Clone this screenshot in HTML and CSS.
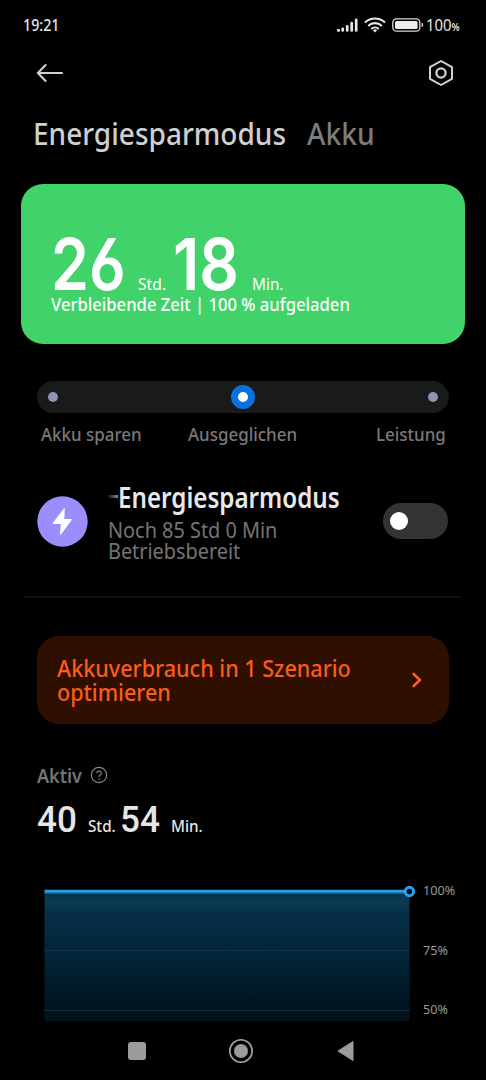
FILE: index.html
```html
<!DOCTYPE html>
<html lang="de">
<head>
    <meta charset="UTF-8">
    <meta name="viewport" content="width=device-width, initial-scale=1.0">
    <title>Energiesparmodus</title>
    <link rel="stylesheet" href="styles.css">
</head>
<body>
    <div class="status-bar">
        <span class="text clock">19:21</span>
        <div class="status-icons">
            <svg width="22" height="14" viewBox="0 0 22 14" stroke="#e8e8e8" stroke-width="2.7" stroke-linecap="round">
                <path d="M2.2 12.4h.5M6.7 12.5v-1.7M11.2 12.5V8.3M15.7 12.5V5M20.2 12.5V1.8"/>
            </svg>
            <svg class="wifi" width="22" height="16" viewBox="0 0 22 16" fill="none" stroke="#e8e8e8" stroke-width="2.1">
                <path d="M1 5.6a14.4 14.4 0 0 1 20 0M4.2 8.9a9.7 9.7 0 0 1 13.6 0M7.3 12a5.3 5.3 0 0 1 7.4 0"/>
                <path d="M8.9 13.2L11 15.6l2.1-2.4a3 3 0 0 0-4.2 0z" fill="#e8e8e8" stroke="none"/>
            </svg>
            <svg class="battery" width="32" height="14" viewBox="0 0 32 14">
                <rect x=".8" y=".8" width="27" height="12.4" rx="3.6" fill="none" stroke="#d8d8d8" stroke-width="1.3"/>
                <rect x="3" y="3" width="22.6" height="8" rx="1.6" fill="#ececec"/>
                <path d="M29.6 4.6q1.6.4 1.6 2.4t-1.6 2.4z" fill="#d8d8d8"/>
            </svg>
            <span class="text charge">100<small>%</small></span>
        </div>
    </div>

    <div class="toolbar">
        <svg width="28" height="20" viewBox="0 0 28 20" fill="none" stroke="#d2d2d2" stroke-width="2" stroke-linecap="round" stroke-linejoin="round">
            <path d="M26 10H1.8M9.6 2L1.8 10l7.8 8"/>
        </svg>
        <svg width="26" height="28" viewBox="0 0 26 28" fill="none" stroke="#d2d2d2" stroke-width="2" stroke-linejoin="round">
            <path d="M13 2l11 6.2v11.6L13 26 2 19.8V8.2z"/>
            <circle cx="13" cy="14" r="4.6" stroke-width="2.3"/>
        </svg>
    </div>

    <div class="tabs">
        <span class="text tab-active">Energiesparmodus</span>
        <span class="text tab">Akku</span>
    </div>

    <div class="card">
        <div class="remaining">
            <span class="text big hours">26</span>
            <span class="text std">Std.</span>
            <span class="text big minutes">18</span>
            <span class="text min">Min.</span>
        </div>
        <span class="text caption">Verbleibende Zeit | 100 % aufgeladen</span>
    </div>

    <div class="slider">
        <span class="dot"></span>
        <span class="dot selected"></span>
        <span class="dot"></span>
    </div>
    <div class="slider-labels">
        <span class="text">Akku sparen</span>
        <span class="text">Ausgeglichen</span>
        <span class="text">Leistung</span>
    </div>

    <div class="saver">
        <svg width="51" height="51" viewBox="0 0 51 51">
            <circle cx="25.5" cy="25.5" r="25.2" fill="#9b8dfb"/>
            <path d="M26.8 12.4L15.8 27q-.6 1 .5 1h7.5l-.8 10.2q.1 1.2.9.2L34.8 24q.6-1-.5-1h-7l.5-10.2q-.2-1.2-1-.4z" fill="#fff"/>
        </svg>
        <div class="saver-text">
            <div class="saver-title"><span class="fade"></span><span class="text saver-name">Energiesparmodus</span></div>
            <span class="text saver-line">Noch 85 Std 0 Min</span>
            <span class="text saver-line">Betriebsbereit</span>
        </div>
        <div class="toggle"><span class="knob"></span></div>
    </div>

    <div class="divider"></div>

    <div class="optimize">
        <div>
            <span class="text optimize-line">Akkuverbrauch in 1 Szenario</span>
            <span class="text optimize-line">optimieren</span>
        </div>
        <svg width="12" height="18" viewBox="0 0 12 18" fill="none" stroke="#fb602a" stroke-width="2.6" stroke-linecap="round" stroke-linejoin="round">
            <path d="M2.6 3l6.3 6-6.3 6"/>
        </svg>
    </div>

    <div class="active-head">
        <span class="text active-title">Aktiv</span>
        <svg width="18" height="18" viewBox="0 0 18 18" fill="none" stroke="#858585" stroke-width="1.2">
            <circle cx="9" cy="9" r="7.7"/>
            <path d="M6.7 7.3a2.3 2.1 0 1 1 3.5 1.7q-1.2.6-1.2 1.9M9 12.1v1.3"/>
        </svg>
    </div>
    <div class="active-time">
        <span class="text number">40</span>
        <span class="text unit">Std.</span>
        <span class="text number">54</span>
        <span class="text unit">Min.</span>
    </div>

    <div class="chart">
        <svg width="373" height="137" viewBox="0 0 373 137">
            <defs>
                <linearGradient id="area" x1="0" y1="0" x2="0" y2="1">
                    <stop offset="0" stop-color="#05334a"/>
                    <stop offset=".07" stop-color="#0a3b50"/>
                    <stop offset=".16" stop-color="#052f45"/>
                    <stop offset=".5" stop-color="#022539"/>
                    <stop offset=".85" stop-color="#011521"/>
                    <stop offset="1" stop-color="#01121b"/>
                </linearGradient>
            </defs>
            <rect x=".5" y="9" width="365" height="128" fill="url(#area)"/>
            <path d="M0 66.5h365M0 126.5h365" stroke="#2a4351" stroke-dasharray="1 1"/>
            <path d="M.5 9.2h365" stroke="#0c5a8e" stroke-width="1.6"/>
            <path d="M.5 7.2h365" stroke="#28a0ec" stroke-width="3"/>
            <circle cx="365.4" cy="7.5" r="4.2" fill="#000" stroke="#28a0ec" stroke-width="3"/>
        </svg>
        <div class="axis">
            <span class="text axis-label">100%</span>
            <span class="text axis-label">75%</span>
            <span class="text axis-label">50%</span>
        </div>
    </div>

    <div class="nav-bar">
        <svg width="18" height="18" viewBox="0 0 18 18"><rect width="18" height="18" rx="3" fill="#9c9c9c"/></svg>
        <svg width="24" height="24" viewBox="0 0 24 24">
            <circle cx="12" cy="12" r="11.2" fill="none" stroke="#a2a2a2" stroke-width="1.6"/>
            <circle cx="12" cy="12" r="7" fill="#9c9c9c"/>
        </svg>
        <svg width="18" height="22" viewBox="0 0 18 22"><path d="M16 1.5v19L1 11z" fill="#9c9c9c" stroke="#9c9c9c" stroke-linejoin="round"/></svg>
    </div>
</body>
</html>
```
FILE: styles.css
```css
body {
    font-family: "Noto Sans", sans-serif;
    margin: 0;
    padding: 0;
    background-color: #000;
    color: #e6e6e6;
    height: 1080px;
    overflow: hidden;
}
svg {
    display: block;
    flex: none;
}
/* narrow lettering */
.text {
    display: block;
    flex: none;
    white-space: nowrap;
    transform-origin: left center;
    transform: scaleX(0.93);
}
.status-bar {
    display: flex;
    justify-content: space-between;
    align-items: center;
    height: 50px;
    padding: 0 26px 0 23px;
    box-sizing: border-box;
}
.clock {
    font-size: 16px;
    font-weight: 500;
    transform: scaleX(0.89);
}
.status-icons {
    display: flex;
    align-items: center;
}
.wifi {
    margin-left: 6px;
}
.battery {
    margin-left: 6px;
}
.charge {
    font-size: 16px;
    width: 34px;
    margin-left: 2px;
}
.charge small {
    font-size: 10px;
    font-weight: 600;
}
.toolbar {
    display: flex;
    justify-content: space-between;
    align-items: center;
    height: 46px;
    padding: 0 32px 0 36px;
}
.tabs {
    display: flex;
    height: 73px;
    padding: 15px 0 0 33px;
    font-size: 31.5px;
    font-weight: 500;
    line-height: 44px;
    color: #cfcfcf;
}
.tab-active {
    width: 274px;
    transform: scaleX(0.89);
}
.tab {
    color: #7b7b7b;
    transform: scaleX(0.895);
}
.card {
    height: 160px;
    margin: 0 21px;
    padding: 44px 0 0 30px;
    box-sizing: border-box;
    border-radius: 22px;
    background-color: #41d36a;
    color: #fff;
}
.remaining {
    display: flex;
    align-items: baseline;
    font-size: 16.5px;
    line-height: 24px;
}
.big {
    font-family: Inter, sans-serif;
    font-size: 72px;
    font-weight: 600;
    line-height: 72px;
    font-feature-settings: "cv03";
}
.hours {
    width: 87px;
    transform: scaleX(0.845);
}
.std {
    width: 35px;
    transform: scaleX(0.95);
}
.minutes {
    width: 79px;
    transform: scaleX(0.86);
}
.caption {
    margin-top: -6px;
    font-size: 17.5px;
    font-weight: 500;
    line-height: 20px;
    width: 314px;
    transform: scaleX(0.95);
}
.slider {
    display: flex;
    justify-content: space-between;
    align-items: center;
    height: 32px;
    margin: 37px 37px 0;
    padding: 0 11px;
    border-radius: 16px;
    background-color: #191b1a;
}
.dot {
    width: 10px;
    height: 10px;
    border-radius: 50%;
    background-color: #9094b4;
}
.selected {
    background-color: #fff;
    border: 7px solid #0a72dc;
}
.slider-labels {
    display: grid;
    grid-template-columns: 147px 188px auto;
    margin: 9px 0 0 41px;
    font-size: 18.5px;
    font-weight: 500;
    line-height: 24px;
    color: #797979;
}
.slider-labels .text {
    transform: scaleX(0.915);
}
.saver {
    display: flex;
    align-items: center;
    height: 84px;
    margin: 33px 38px 0 36.5px;
}
.saver-text {
    flex: 1;
    padding-left: 20.5px;
    font-size: 21px;
    line-height: 21.5px;
    color: #747474;
}
.saver-title {
    display: flex;
    align-items: center;
    margin-bottom: 6px;
    font-size: 28px;
    font-weight: 600;
    line-height: 34px;
    color: #e8e8e8;
}
.saver-name {
    transform: scaleX(0.863);
}
.saver-line {
    transform: scaleX(0.946);
}
.fade {
    width: 10px;
    height: 3px;
    background: linear-gradient(to right, #111, #888);
}
.toggle {
    width: 65px;
    height: 36px;
    border-radius: 18px;
    background-color: #333;
    display: flex;
    align-items: center;
}
.knob {
    width: 18px;
    height: 18px;
    margin-left: 7px;
    border-radius: 50%;
    background-color: #fff;
}
.divider {
    height: 2px;
    margin: 33px 24px 0;
    background-color: #0e0e0e;
}
.optimize {
    display: flex;
    justify-content: space-between;
    align-items: center;
    height: 88px;
    margin: 38px 37px 0;
    padding: 0 26px 0 20px;
    border-radius: 22px;
    background-color: #2e0f00;
    color: #fb5c1c;
    font-size: 23px;
    font-weight: 500;
    line-height: 24px;
}
.optimize-line {
    transform: scaleX(0.938);
}
.active-head {
    display: flex;
    align-items: center;
    height: 26px;
    margin: 38px 0 0 37px;
    font-size: 20px;
    font-weight: 600;
    color: #757575;
}
.active-title {
    width: 53px;
    transform: scaleX(0.9);
}
.active-time {
    display: grid;
    grid-template-columns: 51px 32px 51px auto;
    align-items: baseline;
    height: 40px;
    margin: 12px 0 0 37px;
    line-height: 40px;
}
.number {
    font-family: Roboto, sans-serif;
    font-size: 36.5px;
    font-weight: 500;
    transform: scaleX(0.96);
}
.unit {
    font-size: 16px;
    font-weight: 500;
    transform: scaleX(0.95);
}
.chart {
    display: flex;
    height: 137px;
    margin: 44px 0 0 44px;
}
.axis {
    padding-left: 6px;
    font-size: 13px;
    line-height: 59.5px;
    color: #9a9a9a;
    margin-top: -23px;
}
.axis-label {
    transform: scaleX(0.97);
}
.nav-bar {
    display: flex;
    align-items: center;
    height: 59px;
    padding-left: 127.5px;
    gap: 83.5px;
}
```
